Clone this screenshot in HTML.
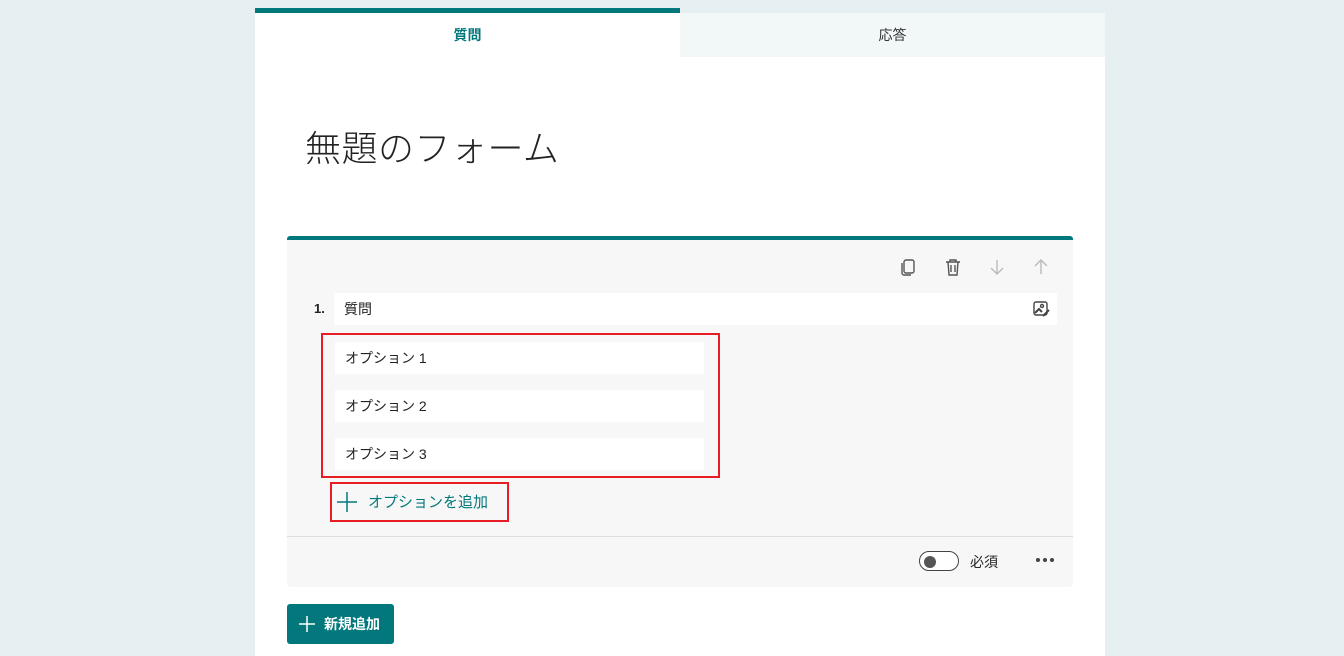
<!DOCTYPE html>
<html><head><meta charset="utf-8"><style>
*{box-sizing:border-box;margin:0;padding:0}
body{width:1344px;height:656px;background:#e6eff2;font-family:"Liberation Sans","Noto Sans CJK JP",sans-serif;position:relative;overflow:hidden;color:#222}
.page{position:absolute;left:255px;top:13px;width:850px;height:643px;background:#fff}
.tab{position:absolute;top:8px;height:49px;width:425px;font-size:14px;display:flex;align-items:center;justify-content:center}
.t1{left:255px;background:#fff;border-top:5px solid #03787c;color:#03787c;font-weight:bold}
.t2{left:680px;top:13px;height:44px;background:#f2f7f7;color:#333}
.title{position:absolute;left:305px;top:120px;font-size:36px;color:#222;font-weight:300;letter-spacing:0.5px}
.card{position:absolute;left:287px;top:236px;width:786px;height:351px;background:#f7f7f7;border-top:4px solid #03787c;border-radius:3px}
.ab{position:absolute;background:#fff;font-size:14px;padding-left:10px;display:flex;align-items:center}
.red{position:absolute;border:2px solid #e81c24}
.btn{position:absolute;left:287px;top:604px;width:107px;height:40px;background:#03787c;border-radius:3px;color:#fff;font-weight:bold;font-size:14px;display:flex;align-items:center;padding-left:12px;gap:9px}
</style></head><body>
<div class="page"></div>
<div class="tab t1">質問</div>
<div class="tab t2">応答</div>
<div class="title">無題のフォーム</div>
<div class="card"></div>
<svg style="position:absolute;left:896px;top:256px" width="160" height="24" fill="none" stroke-width="1.4">
<g stroke="#555"><rect x="8" y="4" width="10" height="13" rx="2"/><path d="M6 7v10a2 2 0 0 0 2 2h7"/>
<path d="M50 6h14M54 6V4h6v2M52 6l1 13h8l1-13M55 9v7M59 9v7"/></g>
<g stroke="#bbb"><path d="M101 4v14M95 12l6 6 6-6"/><path d="M145 18V4M139 10l6-6 6 6"/></g>
</svg>
<div style="position:absolute;left:314px;top:301px;font-size:13px;font-weight:bold">1.</div>
<div class="ab" style="left:334px;top:293px;width:723px;height:32px">質問</div>
<svg style="position:absolute;left:1032px;top:300px" width="20" height="18" fill="none" stroke="#444" stroke-width="1.4"><rect x="2" y="2" width="13" height="13" rx="2"/><circle cx="10" cy="6" r="1.5"/><path d="M3 13l4-4 3 3M11 16l6-6" stroke-width="2"/></svg>
<div class="red" style="left:321px;top:333px;width:399px;height:145px"></div>
<div class="ab" style="left:335px;top:342px;width:369px;height:32px">オプション 1</div>
<div class="ab" style="left:335px;top:390px;width:369px;height:32px">オプション 2</div>
<div class="ab" style="left:335px;top:438px;width:369px;height:32px">オプション 3</div>
<div class="red" style="left:330px;top:482px;width:179px;height:40px"></div>
<svg style="position:absolute;left:337px;top:491px" width="22" height="22" stroke="#03787c" stroke-width="1.5"><path d="M10 1v20M0 11h20"/></svg>
<div style="position:absolute;left:368px;top:491px;font-size:15px;color:#03787c">オプションを追加</div>
<div style="position:absolute;left:287px;top:536px;width:786px;height:1px;background:#ddd"></div>
<div style="position:absolute;left:919px;top:551px;width:40px;height:20px;border:1px solid #444;border-radius:10px;background:#fff"><div style="position:absolute;left:4px;top:4px;width:12px;height:12px;border-radius:6px;background:#555"></div></div>
<div style="position:absolute;left:970px;top:552px;font-size:14px">必須</div>
<svg style="position:absolute;left:1035px;top:557px" width="20" height="6" fill="#444"><circle cx="3" cy="3" r="2"/><circle cx="10" cy="3" r="2"/><circle cx="17" cy="3" r="2"/></svg>
<div class="btn"><svg width="16" height="16" stroke="#fff" stroke-width="1.5"><path d="M8 0v16M0 8h16"/></svg>新規追加</div>
</body></html>
